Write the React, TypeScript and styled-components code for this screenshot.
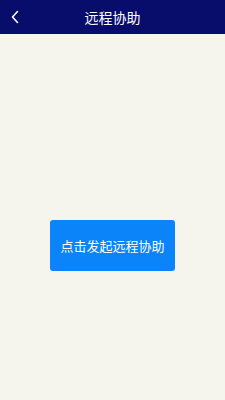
import React from "react";
import styled, { createGlobalStyle } from "styled-components";

const Global = createGlobalStyle`
  html, body { margin: 0; padding: 0; background: #f5f5ee; }
  body { font-family: "Noto Sans CJK SC", "Noto Sans", sans-serif; }
`;

const Page = styled.div`
  display: flex;
  flex-direction: column;
  height: 400px;
  background: #f5f5ee;
`;

const Header = styled.header`
  height: 34px;
  background: #080c6a;
  display: grid;
  grid-template-columns: 34px 1fr 34px;
  align-items: center;
  color: #fff;
`;

const Back = styled.button`
  background: none;
  border: none;
  padding: 0 0 0 10px;
  display: flex;
  align-items: center;
  color: #fff;
`;

const Title = styled.h1`
  margin: 0;
  text-align: center;
  font-size: 14px;
  font-weight: 400;
`;

const Body = styled.main`
  flex: 1;
  display: flex;
  justify-content: center;
  padding-top: 186px;
`;

const Action = styled.button`
  width: 125px;
  height: 51px;
  border: none;
  border-radius: 3px;
  background: #0a84f8;
  color: #fff;
  font-family: "Noto Sans CJK SC", sans-serif;
  font-size: 13px;
`;

export default function App() {
  return (
    <Page>
      <Global />
      <Header>
        <Back aria-label="back">
          <svg width="10" height="14" viewBox="0 0 10 14">
            <path d="M7.5 1.5 L2.5 7 L7.5 12.5" fill="none" stroke="#fff" strokeWidth="1.6" strokeLinecap="round" strokeLinejoin="round" />
          </svg>
        </Back>
        <Title>远程协助</Title>
        <span />
      </Header>
      <Body>
        <Action>点击发起远程协助</Action>
      </Body>
    </Page>
  );
}
